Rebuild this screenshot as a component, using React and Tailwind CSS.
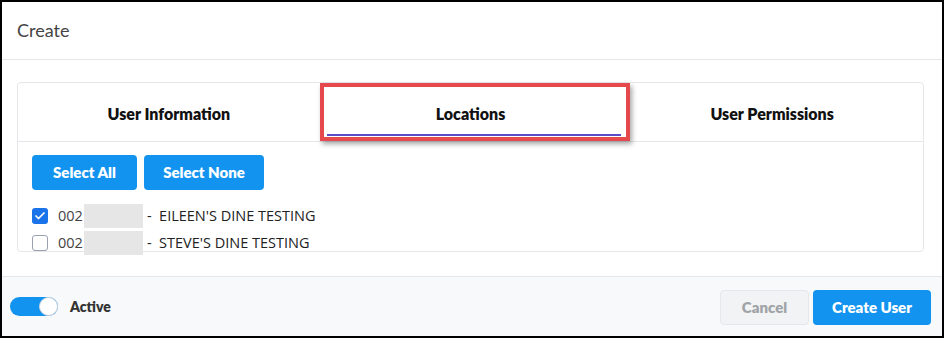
import { useState } from "react";
import { Check } from "lucide-react";

const locations = [
  { id: 1, code: "002", name: "EILEEN'S DINE TESTING", checked: true },
  { id: 2, code: "002", name: "STEVE'S DINE TESTING", checked: false },
];

export default function App() {
  const [items, setItems] = useState(locations);
  const [active, setActive] = useState(true);

  const toggle = (id) =>
    setItems((prev) =>
      prev.map((l) => (l.id === id ? { ...l, checked: !l.checked } : l)),
    );

  return (
    <div className="w-[944px] h-[338px] box-border border-2 border-black bg-white flex flex-col font-['Lato',sans-serif] text-[#1a1a1a] overflow-hidden">
      {/* header */}
      <div className="h-[58px] shrink-0 border-b border-gray-200 flex items-center pl-[15px]">
        <h1 className="text-[18px] text-[#444] font-normal">Create</h1>
      </div>

      {/* body */}
      <div className="flex-1 pl-[15px] pr-[18px] pt-[22px]">
        <div className="relative h-[170px] rounded border border-gray-200 bg-white">
          <div className="grid grid-cols-3 h-[59px] border-b border-gray-200">
            <div className="flex items-center justify-center pt-[3px] text-[16px] font-extrabold text-[#111]">
              User Information
            </div>
            <div className="relative flex items-center justify-center pt-[3px] text-[16px] font-extrabold text-[#111]">
              Locations
              <span className="absolute left-[7px] right-0 bottom-[5px] h-[2px] bg-[#5a4bc7]"></span>
            </div>
            <div className="flex items-center justify-center pt-[3px] text-[16px] font-extrabold text-[#111]">
              User Permissions
            </div>
          </div>

          <div className="pl-[14px] pt-[13px]">
            <div className="flex gap-[7px]">
              <button className="h-[35px] w-[105px] rounded bg-[#1193ef] text-white text-[15px] font-extrabold">
                Select All
              </button>
              <button className="h-[35px] w-[120px] rounded bg-[#1193ef] text-white text-[15px] font-extrabold">
                Select None
              </button>
            </div>

            <div className="mt-[12px] flex flex-col font-['Open_Sans',sans-serif] text-[14.5px]">
              {items.map((l) => (
                <label
                  key={l.id}
                  className="h-[27px] flex items-center cursor-pointer"
                >
                  <span
                    onClick={() => toggle(l.id)}
                    className={
                      l.checked
                        ? "w-[16px] h-[16px] rounded-[3px] bg-[#1a73e8] flex items-center justify-center"
                        : "w-[16px] h-[16px] rounded-[3px] border border-gray-400 bg-white"
                    }
                  >
                    {l.checked && (
                      <Check size={12} strokeWidth={3.5} className="text-white" />
                    )}
                  </span>
                  <span className="ml-[10px] text-[#444]">{l.code}</span>
                  <span className="w-[59px] h-[24px] bg-[#e6e6e6] ml-[1px]"></span>
                  <span className="ml-[4px] text-[#222]">-&nbsp;&nbsp;{l.name}</span>
                </label>
              ))}
            </div>
          </div>

          {/* highlight annotation */}
          <div className="absolute left-[302px] top-0 w-[310px] h-[58px] border-4 border-[#e5484d] shadow-[2px_3px_5px_rgba(0,0,0,0.35)] pointer-events-none"></div>
        </div>
      </div>

      {/* footer */}
      <div className="h-[60px] shrink-0 border-t border-gray-200 bg-[#f8f9fa] flex items-center justify-between pl-[8px] pr-[11px]">
        <div className="flex items-center">
          <button
            onClick={() => setActive(!active)}
            className="relative w-[48px] h-[19px] rounded-full bg-[#1193ef]"
          >
            <span className="absolute right-[0px] top-[0px] w-[19px] h-[19px] rounded-full bg-white border border-gray-300"></span>
          </button>
          <span className="ml-[12px] text-[14px] font-extrabold text-[#333]">Active</span>
        </div>
        <div className="flex gap-[4px] mt-[2px]">
          <button className="h-[35px] w-[89px] rounded bg-[#f2f3f4] border border-gray-200 text-[15px] font-extrabold text-[#a0a4a8]">
            Cancel
          </button>
          <button className="h-[35px] w-[118px] rounded bg-[#1193ef] text-white text-[15px] font-extrabold">
            Create User
          </button>
        </div>
      </div>
    </div>
  );
}
